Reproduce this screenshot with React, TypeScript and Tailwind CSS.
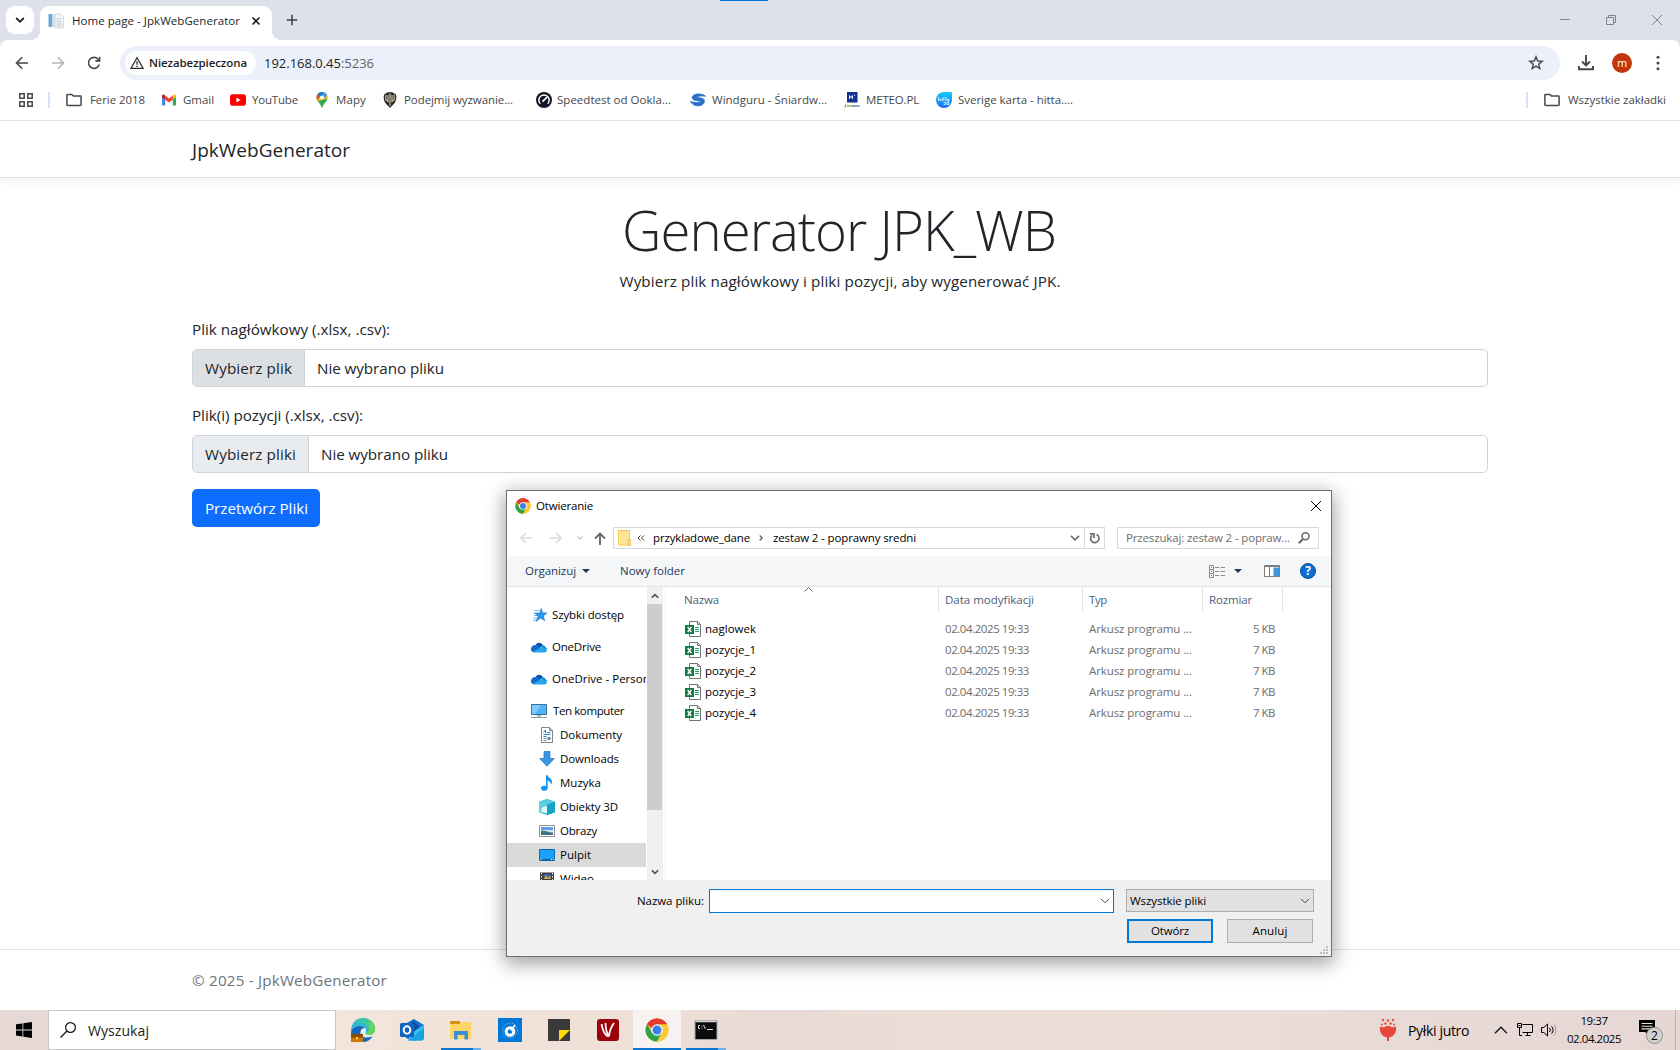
import { useLayoutEffect, useRef, type ReactNode } from "react";

/* One line of text whose tracking is adjusted so that it fills its box. */
function Fit({ className = "", children }: { className?: string; children: ReactNode }) {
  const box = useRef<HTMLSpanElement>(null);
  const inner = useRef<HTMLSpanElement>(null);
  useLayoutEffect(() => {
    const b = box.current;
    const i = inner.current;
    if (!b || !i) return;
    i.style.letterSpacing = "0px";
    const n = (i.textContent || "").length;
    const spare = b.getBoundingClientRect().width - i.getBoundingClientRect().width;
    i.style.letterSpacing = `${spare / Math.max(1, n)}px`;
  }, []);
  return (
    <span ref={box} className={`block shrink-0 whitespace-nowrap ${className}`}>
      <span ref={inner} className="inline-block">{children}</span>
    </span>
  );
}

function ChromeLogo({ className }: { className: string }) {
  return (
    <svg viewBox="0 0 48 48" className={className}>
      <circle cx="24" cy="24" r="23" fill="#fcc934" />
      <path d="M24 24 L4.1 12.5 A23 23 0 0 1 43.9 12.5 L24 12.5 Z" fill="#ea4335" />
      <path d="M4.1 12.5 A23 23 0 0 0 24 47 L34 29.7 L24 24 L14 29.7 Z" fill="#2ba24c" />
      <path d="M43.9 12.5 A23 23 0 0 1 24 47 L34 29.7 L33 18 L24 12.5 Z" fill="#fcc934" />
      <path d="M4.1 12.5 A23 23 0 0 1 43.9 12.5 L24 12.5 L13 20 Z" fill="#e33b2e" />
      <circle cx="24" cy="24" r="11.5" fill="#fff" />
      <circle cx="24" cy="24" r="9" fill="#3b7ded" />
    </svg>
  );
}

const FolderOutline = () => (
  <svg viewBox="0 0 16 16" className="h-4 w-4 shrink-0" fill="none" stroke="#474747" strokeWidth="1.5">
    <path d="M.9 3.1c0-.4.3-.7.7-.7h4.2l1.7 1.7h6.9c.4 0 .7.3.7.7v8c0 .4-.3.7-.7.7H1.6c-.4 0-.7-.3-.7-.7z" />
  </svg>
);

const GmailIcon = () => (
  <svg viewBox="0 0 16 16" className="h-4 w-4 shrink-0">
    <path d="M1 4v8.4c0 .6.5 1 1 1h2.2V7.2z" fill="#4285f4" />
    <path d="M11.8 13.4H14c.6 0 1-.4 1-1V4l-3.2 3.2z" fill="#34a853" />
    <path d="M11.8 3.5v4.2L15 5.3V4c0-1.200-1.300-1.900-2.300-1.200z" fill="#fbbc04" />
    <path d="M4.200 7.700V3.500L8 6.400l3.800-2.900v4.200L8 10.600z" fill="#ea4335" />
    <path d="M1 4v1.300l3.200 2.400V3.500l-.9-.7C2.300 2.100 1 2.800 1 4z" fill="#c5221f" />
  </svg>
);

const YouTubeIcon = () => (
  <svg viewBox="0 0 16 16" className="h-4 w-4 shrink-0">
    <rect x="0" y="2.300" width="16" height="11.400" rx="2.800" fill="#f00" />
    <path d="M6.400 5.600v4.800L10.600 8z" fill="#fff" />
  </svg>
);

const MapsIcon = () => (
  <svg viewBox="0 0 16 16" className="h-4 w-4 shrink-0">
    <path d="M8 0a5.500 5.500 0 0 1 5.500 5.500C13.500 9.500 9.500 10.500 8 16 6.500 10.500 2.500 9.500 2.500 5.500A5.500 5.500 0 0 1 8 0z" fill="#34a853" />
    <path d="M3.800 2L6.300 4.100 3.200 8.100C2.300 6.400 2 4 3.800 2z" fill="#ea4335" />
    <path d="M3.800 2C5 .5 7.500-.5 9.800.3L6.300 4.300z" fill="#1a73e8" />
    <path d="M9.800.3c1.500.5 2.700 1.500 3.300 3L9.600 7 8 3.500z" fill="#4f93f7" />
    <path d="M9.600 7l3.500-3.700c.8 1.900.3 3.900-.8 5.300L8.600 12 3.200 8.100l3-3.600z" fill="#fbbc04" />
    <path d="M4 9.200l6.100-2 3.100-.3c-.7 3.300-4 4.200-5.200 9.100C6.900 12.500 5.300 11 4 9.200z" fill="#34a853" />
    <circle cx="8" cy="5.500" r="2" fill="#fff" />
  </svg>
);

const TanksIcon = () => (
  <svg viewBox="0 0 16 16" className="h-4 w-4 shrink-0">
    <path d="M2 2.500C4 .8 6.500 0 8 0s4 .8 6 2.500c.8 4 0 7-2 9.200L8 16l-4-4.300C2 9.500 1.200 6.500 2 2.500z" fill="#2a2824" />
    <path d="M3.800 2.800v5l2.200 1.800V3M8 1.200V14.300M12.200 2.800v5L10 9.600V3" fill="none" stroke="#c8c1ad" strokeWidth="1.200" />
  </svg>
);

const SpeedtestIcon = () => (
  <svg viewBox="0 0 16 16" className="h-4 w-4 shrink-0">
    <circle cx="8" cy="8" r="8" fill="#141526" />
    <path d="M4.300 11.800a5.200 5.200 0 1 1 7.400 0" fill="none" stroke="#fff" strokeWidth="1.500" />
    <path d="M7 9.200L10.500 5.600" stroke="#fff" strokeWidth="1.700" strokeLinecap="round" />
  </svg>
);

const WindguruIcon = () => (
  <svg viewBox="0 0 16 16" className="h-4 w-4 shrink-0">
    <path
      d="M15.500 4.200C13 2 7 1 3.500 3.300 1.200 5 2 7.500 4.500 8.200c2.500.7 5.500.3 6.500 1.300-2 1.500-7 1.300-10.500 0 2 3.500 6.500 5.300 10.500 3.800 3.500-1.300 4.300-4.500 2.500-6.200C11.500 5.500 8 6 6 5.200c2-1.400 6.500-1.600 9.500-1z"
      fill="#2b6fc9"
      stroke="#2b6fc9"
      strokeWidth=".9"
      strokeLinejoin="round"
    />
  </svg>
);

const MeteoIcon = () => (
  <svg viewBox="0 0 16 16" className="h-4 w-4 shrink-0">
    <rect x="3" y="0" width="10.500" height="10.500" fill="#12328c" />
    <path d="M5.500 7V3.500l1.500 2.200 1.500-2.200V7" fill="none" stroke="#fff" strokeWidth=".9" />
    <path d="M10.200 3.200h1" stroke="#fff" strokeWidth="1" />
    <path d="M.5 15.300c1-.3 1.200-1.700 1.200-3M3 14h3.500" fill="none" stroke="#7ab32b" strokeWidth="1.300" />
    <path d="M7 14h8.500" stroke="#33558f" strokeWidth="1.100" />
  </svg>
);

const HittaIcon = () => (
  <svg viewBox="0 0 16 16" className="h-4 w-4 shrink-0">
    <defs>
      <linearGradient id="hitta" x1="0" y1="0" x2="0" y2="1">
        <stop offset="0" stopColor="#12ccf5" />
        <stop offset="1" stopColor="#1f6df5" />
      </linearGradient>
    </defs>
    <path d="M8 0h6.500C15.500 0 16 .5 16 1.500V8a8 8 0 1 1-8-8z" fill="url(#hitta)" />
    <path d="M2.500 5v4M2.500 7.300h2V9M6 5.800V9M7.800 5v4M9.800 5v4M11 7.300h2V9h-2zM7.500 10.500h2v2h-2M11 10.500h2v2h-2z" fill="none" stroke="#d9f3ff" strokeWidth=".9" />
  </svg>
);

const bookmarks: { icon: ReactNode; gap: string; label: string; text: string }[] = [
  { icon: <FolderOutline />, gap: "ml-4", label: "Ferie 2018", text: "ml-2 w-[55px]" },
  { icon: <GmailIcon />, gap: "ml-4", label: "Gmail", text: "ml-[6px] w-[31px]" },
  { icon: <YouTubeIcon />, gap: "ml-4", label: "YouTube", text: "ml-[6px] w-[46px]" },
  { icon: <MapsIcon />, gap: "ml-4", label: "Mapy", text: "ml-[6px] w-[30px]" },
  { icon: <TanksIcon />, gap: "ml-4", label: "Podejmij wyzwanie...", text: "ml-[6px] w-[109px]" },
  { icon: <SpeedtestIcon />, gap: "ml-[23px]", label: "Speedtest od Ookla...", text: "ml-[5px] w-[114px]" },
  { icon: <WindguruIcon />, gap: "ml-[19px]", label: "Windguru - Śniardw...", text: "ml-[6px] w-[115px]" },
  { icon: <MeteoIcon />, gap: "ml-[17px]", label: "METEO.PL", text: "ml-[6px] w-[53px]" },
  { icon: <HittaIcon />, gap: "ml-[17px]", label: "Sverige karta - hitta....", text: "ml-[6px] w-[115px]" },
];

function BrowserChrome() {
  return (
    <header className="relative h-[121px] shrink-0 bg-[#dee1e9]">
      <div className="absolute left-[720px] top-0 flex h-px w-[241px] bg-[#e6e6e6]">
        <div className="h-px w-12 bg-[#0078d7]" />
      </div>
      <div className="flex h-10 items-start">
        <button className="ml-[6px] mt-[6px] flex h-7 w-7 items-center justify-center rounded-[9px] bg-white">
          <svg viewBox="0 0 10 10" className="h-[10px] w-[10px]" fill="none" stroke="#1f1f1f" strokeWidth="1.800">
            <path d="M1.200 3l3.800 3.800L8.800 3" />
          </svg>
        </button>
        <span className="mt-[30px] h-[10px] w-[6px] bg-[radial-gradient(circle_at_-4px_0,transparent_10px,white_10.5px)]" />
        <div className="mt-[6px] flex h-[34px] w-[232px] items-center rounded-t-[9px] bg-white pb-[5px] pl-2">
          <svg viewBox="0 0 16 16" className="h-4 w-4 shrink-0">
            <path d="M.5 1h4v13h-4z" fill="#6aa9d8" />
            <path d="M4.500 1h4.500v13H4.500z" fill="#d4e2ec" />
            <path d="M7 1h6l2.500 2.500V15H7z" fill="#f1f3f5" stroke="#cdd2d6" strokeWidth=".7" />
            <path d="M8.500 6h5M8.500 8.500h5M8.500 11h5M8.500 13h5" stroke="#c3cad1" strokeWidth="1" />
          </svg>
          <Fit className="ml-2 w-[168px] text-[11.500px] leading-4 text-[#1f1f1f]">Home page - JpkWebGenerator</Fit>
          <svg viewBox="0 0 10 10" className="ml-[11px] h-[10px] w-[10px]" stroke="#1f1f1f" strokeWidth="1.600">
            <path d="M1.500 1.500l7 7M8.500 1.500l-7 7" />
          </svg>
        </div>
        <span className="mt-[30px] h-[10px] w-[10px] bg-[radial-gradient(circle_at_10px_0,transparent_10px,white_10.5px)]" />
        <svg viewBox="0 0 12 12" className="ml-1 mt-[14px] h-3 w-3" stroke="#3c4043" strokeWidth="1.500">
          <path d="M6 .8v10.400M.8 6h10.400" />
        </svg>
        <div className="ml-auto mr-[17px] mt-[14px] flex gap-[34px]">
          <svg viewBox="0 0 12 12" className="h-3 w-3" stroke="#808389" fill="none"><path d="M1 5.500h10" /></svg>
          <svg viewBox="0 0 12 12" className="h-3 w-3" stroke="#808389" fill="none"><path d="M1.500 3.500h7v7h-7zM3.500 3.500v-2h7v7h-2" /></svg>
          <svg viewBox="0 0 12 12" className="h-3 w-3" stroke="#808389" fill="none"><path d="M1 1l10 10M11 1L1 11" /></svg>
        </div>
      </div>
      <div className="h-[81px] rounded-t-[8px] border-b border-[#dfe0e2] bg-white">
        <div className="flex h-[46px] items-center">
          <svg viewBox="0 0 14 14" className="ml-[15px] h-[14px] w-[14px]" fill="none" stroke="#474747" strokeWidth="1.600">
            <path d="M13 7H1.800M7.200 1.300L1.500 7l5.700 5.700" />
          </svg>
          <svg viewBox="0 0 14 14" className="ml-[22px] h-[14px] w-[14px]" fill="none" stroke="#b4b4b4" strokeWidth="1.600">
            <path d="M1 7h11.200M6.800 1.300L12.500 7l-5.700 5.700" />
          </svg>
          <svg viewBox="0 0 14 14" className="ml-[22px] h-[14px] w-[14px]" fill="none" stroke="#474747" strokeWidth="1.600">
            <path d="M12.300 8.500A5.500 5.500 0 1 1 11 3l1.400 1.500" />
            <path d="M12.600.7v4.200H8.400" />
          </svg>
          <div className="ml-[19px] flex h-[34px] w-[1440px] items-center rounded-full bg-[#ecf0fa]">
            <div className="ml-[5px] flex h-6 w-[131px] items-center rounded-full bg-white">
              <svg viewBox="0 0 14 14" className="ml-[5px] h-[14px] w-[14px]" fill="none" stroke="#2f2f2f" strokeWidth="1.300">
                <path d="M7 1.700L13 12.300H1z" />
                <path d="M7 5.300v3.500M7 9.700v1.300" />
              </svg>
              <Fit className="ml-[5px] w-[98px] text-[11.500px] font-semibold leading-4 text-[#1f1f1f]">Niezabezpieczona</Fit>
            </div>
            <Fit className="ml-2 w-[110px] text-[13px] leading-5 text-[#1f1f1f]">
              192.168.0.45<span className="text-[#5f6368]">:5236</span>
            </Fit>
            <svg viewBox="0 0 16 16" className="ml-auto mr-4 h-4 w-4" fill="none" stroke="#474747" strokeWidth="1.400">
              <path d="M8 1.800l1.700 4.200 4.500.3-3.500 2.900 1.100 4.400L8 11.200l-3.800 2.400 1.100-4.400L1.800 6.300l4.500-.3z" />
            </svg>
          </div>
          <svg viewBox="0 0 16 16" className="ml-[18px] h-4 w-4" fill="none" stroke="#474747" strokeWidth="1.900">
            <path d="M8 0v10M4 6.500l4 4 4-4M1 11v3.200h14V11" />
          </svg>
          <div className="ml-[18px] flex h-5 w-5 items-center justify-center rounded-full bg-[#c1360d] pb-0.5 text-[11px] leading-none text-white">m</div>
          <svg viewBox="0 0 4 16" className="ml-6 h-4 w-1" fill="#474747">
            <circle cx="2" cy="2.300" r="1.500" /><circle cx="2" cy="8" r="1.500" /><circle cx="2" cy="13.700" r="1.500" />
          </svg>
        </div>
        <div className="flex h-7 items-center text-[11.500px] leading-4 text-[#474747]">
          <svg viewBox="0 0 14 14" className="ml-[19px] h-[14px] w-[14px]" fill="none" stroke="#474747" strokeWidth="1.500">
            <path d="M.8.8h4.400v4.400H.8zM8.800.8h4.400v4.400H8.800zM.8 8.800h4.400v4.400H.8zM8.800 8.800h4.400v4.400H8.800z" />
          </svg>
          <div className="ml-[15px] h-4 w-0.5 bg-[#d3e3fd]" />
          {bookmarks.map((b) => (
            <div key={b.label} className={`flex items-center ${b.gap}`}>
              {b.icon}
              <Fit className={b.text}>{b.label}</Fit>
            </div>
          ))}
          <div className="ml-auto h-4 w-0.5 bg-[#d3e3fd]" />
          <div className="ml-4 mr-[14px] flex items-center">
            <FolderOutline />
            <Fit className="ml-2 w-[98px]">Wszystkie zakładki</Fit>
          </div>
        </div>
      </div>
    </header>
  );
}

function FileField({ button, buttonWidth, hovered }: { button: string; buttonWidth: string; hovered?: boolean }) {
  return (
    <div className="flex h-[38px] overflow-hidden rounded-[5px] border border-[#ced4da] bg-white leading-6">
      <div className={`flex items-center border-r border-[#ced4da] pl-3 pr-3 ${hovered ? "bg-[#dde0e3]" : "bg-[#e9ecef]"}`}>
        <Fit className={buttonWidth}>{button}</Fit>
      </div>
      <div className="flex items-center pl-3">
        <Fit className="w-[127px]">Nie wybrano pliku</Fit>
      </div>
    </div>
  );
}

function Page() {
  return (
    <div className="flex h-[889px] flex-col bg-white text-[15.200px] text-[#212529]">
      <nav className="h-[57px] shrink-0 border-b border-[#dee2e6] px-48 pt-[14px] shadow-[0_4px_12px_rgba(0,0,0,.05)]">
        <Fit className="w-[158px] text-[19px] leading-[30px]">JpkWebGenerator</Fit>
      </nav>
      <main className="flex flex-1 flex-col px-48">
        <h1 className="mt-[19px] flex justify-center pr-[2px] text-[54.500px] font-light leading-[67px]">
          <Fit className="w-[434px]">Generator JPK_WB</Fit>
        </h1>
        <p className="mt-[5px] flex justify-center leading-6">
          <Fit className="w-[441px]">Wybierz plik nagłówkowy i pliki pozycji, aby wygenerować JPK.</Fit>
        </p>
        <label className="mt-6 leading-6"><Fit className="w-[198px]">Plik nagłówkowy (.xlsx, .csv):</Fit></label>
        <div className="mt-2"><FileField button="Wybierz plik" buttonWidth="w-[87px]" hovered /></div>
        <label className="mt-4 leading-6"><Fit className="w-[171px]">Plik(i) pozycji (.xlsx, .csv):</Fit></label>
        <div className="mt-2"><FileField button="Wybierz pliki" buttonWidth="w-[91px]" /></div>
        <button className="mt-4 flex h-[38px] w-32 items-center rounded-[5px] bg-[#0d6efd] pl-[13px] leading-6 text-white">
          <Fit className="w-[103px]">Przetwórz Pliki</Fit>
        </button>
      </main>
      <footer className="h-[61px] shrink-0 border-t border-[#dee2e6] px-48 pt-[18px] leading-6 text-[#6c757d]">
        <Fit className="w-[195px]">© 2025 - JpkWebGenerator</Fit>
      </footer>
    </div>
  );
}

const Cloud = () => (
  <svg viewBox="0 0 16 16" className="h-4 w-4 shrink-0">
    <path d="M4.500 6.500C5.500 3.500 9.500 2 12 6.300l-4 3.200z" fill="#0a4fa8" />
    <path d="M4.500 5.900C2 5.800 0 7.600 0 10c0 1.400.7 2.600 2 3.300l8-4.500C8.500 6.900 6.500 5.700 4.500 5.900z" fill="#0f6cc9" />
    <path d="M9.500 7.500c1.500-1.800 4-1.700 5 .6.900.5 1.500 1.300 1.500 2.500l-3 .4z" fill="#1b8fe0" />
    <path d="M1.500 13l8.300-4.200L16 10.800c0 1.700-1.200 2.700-2.700 2.700H3.500c-.8 0-1.500-.2-2-.5z" fill="#27a5ee" />
  </svg>
);

const quick: { icon: ReactNode; label: string; text: string }[] = [
  {
    label: "Szybki dostęp", text: "w-[72px]",
    icon: (
      <svg viewBox="0 0 16 16" className="h-4 w-4 shrink-0">
        <path d="M3.500 3.500h5M2 6h5M3 8.500h5M2.500 11h4M2 13.300h3.500" stroke="#5db2ee" strokeWidth=".9" />
        <path d="M10.200 1.500l1.400 4.300 4.400.2-3.600 2.800 1.300 5-3.900-2.700-4.600 3.200 1.900-5L4 6.500l4.700-.5z" fill="#2b95e3" stroke="#1977c6" strokeWidth=".6" />
      </svg>
    ),
  },
  { label: "OneDrive", text: "w-[49px]", icon: <Cloud /> },
];

const places: { icon: ReactNode; label: string; text: string; active?: boolean }[] = [
  {
    label: "Dokumenty", text: "w-[62px]",
    icon: <><path d="M2.500.5h8l3 3v12h-11z" fill="#fff" stroke="#858585" /><path d="M10.500.5v3h3" fill="none" stroke="#858585" /><path d="M4.500 5.500l2-2.500v3M8 5.500h3.500M4.500 7.500h7M4.500 9.500h3" stroke="#2a86cf" fill="none" /><path d="M4.500 11.500h3M4.500 13.500h3" stroke="#8d8d8d" fill="none" /><path d="M8.500 10h3v3h-3z" fill="#4c8f9f" /></>,
  },
  {
    label: "Downloads", text: "w-[59px]",
    icon: <path d="M5 .5h6v7h4.300L8 15.300.7 7.500H5z" fill="#3a96e6" stroke="#2273ba" strokeWidth=".7" />,
  },
  {
    label: "Muzyka", text: "w-[41px]",
    icon: <><ellipse cx="5.300" cy="13.200" rx="3.300" ry="2.500" fill="#0f96f2" /><path d="M7 .3h1.600c.3 2 4.600 3.500 4.400 6.500 0 1.200-.5 2.200-1.200 3 .3-2-.8-3.500-3.200-4.300v7.700H7z" fill="#0f96f2" /></>,
  },
  {
    label: "Obiekty 3D", text: "w-[58px]",
    icon: <><path d="M8 0l8 2.700v10.600L8 16l-8-2.700V2.700z" fill="#21b6cf" /><path d="M8 0l8 2.700-8 3-8-3z" fill="#58cfe0" /><path d="M0 2.700l8 3v4L2 14 0 13.300z" fill="#5fd3e2" /><path d="M3 8.500l5-1.500v7.500L2 13z" fill="#e0fafc" /><path d="M8 5.700l8-3v10.600L8 16z" fill="#19a2c2" /></>,
  },
  {
    label: "Obrazy", text: "w-[37px]",
    icon: <><path d="M.5 2.500h15v11H.5z" fill="#fff" stroke="#8f8f8f" /><path d="M2 4h12v3.500H2z" fill="#5d9ee8" /><path d="M2 7h12v2H2z" fill="#cfe4f2" /><path d="M2 7.500c4 0 8 2 12 2V12H2z" fill="#3f7187" /></>,
  },
  {
    label: "Pulpit", text: "w-[31px]", active: true,
    icon: <><path d="M.5 2.500h15v11H.5z" fill="#1ea0fa" stroke="#0a69b0" /><path d="M1 12.500h14" stroke="#0c5e9e" /><path d="M1.500 12.500h1M12 12.500h1M14 12.500h1" stroke="#fff" /></>,
  },
  {
    label: "Wideo", text: "w-[34px]",
    icon: <><path d="M1 1.500h14v13H1z" fill="#3c3c3c" /><path d="M2.500 2v12M13.500 2v12" stroke="#e8e8e8" strokeDasharray="1.500 1.500" /><path d="M4.500 3h7v5h-7z" fill="#3a5fa8" /><path d="M5 8l2-4 2 3 2.500-3v4z" fill="#d9a72c" /></>,
  },
];

const files = [
  { name: "naglowek", text: "w-[51px]", size: "5 KB" },
  { name: "pozycje_1", text: "w-[51px]", size: "7 KB" },
  { name: "pozycje_2", text: "w-[51px]", size: "7 KB" },
  { name: "pozycje_3", text: "w-[51px]", size: "7 KB" },
  { name: "pozycje_4", text: "w-[51px]", size: "7 KB" },
];

const ExcelIcon = () => (
  <svg viewBox="0 0 16 16" className="h-4 w-4 shrink-0">
    <path d="M4.500.5h8l3 3v12h-11z" fill="#fff" stroke="#757575" />
    <path d="M12.500.5v3h3" fill="none" stroke="#757575" />
    <path d="M10 6.500h4M10 8.500h4M10 10.500h4" stroke="#21a366" strokeWidth="1" />
    <path d="M0 4h9v9H0z" fill="#107c41" />
    <path d="M2.700 6l3.600 5M6.300 6l-3.600 5" stroke="#fff" strokeWidth="1.400" />
  </svg>
);

const Chevron = ({ className }: { className: string }) => (
  <svg viewBox="0 0 10 6" className={className} fill="none" stroke="currentColor"><path d="M1 .8l4 4 4-4" /></svg>
);

function OpenDialog() {
  return (
    <div className="absolute left-[506px] top-[490px] flex h-[467px] w-[826px] flex-col border border-[#6c6f74] bg-white text-[11.500px] leading-4 text-black shadow-[0_5px_18px_2px_rgba(0,0,0,.36)]">
      <div className="flex h-[29px] shrink-0 items-center">
        <ChromeLogo className="ml-2 h-4 w-4" />
        <Fit className="ml-[5px] w-[57px]">Otwieranie</Fit>
        <svg viewBox="0 0 12 12" className="ml-auto mr-[9px] h-3 w-3" stroke="#000" fill="none"><path d="M1 1l10 10M11 1L1 11" /></svg>
      </div>
      <div className="mt-[7px] flex h-[22px] shrink-0 items-center">
        <svg viewBox="0 0 13 12" className="ml-[13px] h-3 w-[13px]" fill="none" stroke="#dcdcdc" strokeWidth="1.600"><path d="M12 6H1.500M6 1L1 6l5 5" /></svg>
        <svg viewBox="0 0 13 12" className="ml-[16px] h-3 w-[13px]" fill="none" stroke="#dcdcdc" strokeWidth="1.600"><path d="M0 6h11.500M7 1l5 5-5 5" /></svg>
        <svg viewBox="0 0 6 4" className="ml-[15px] h-1 w-[6px]" fill="none" stroke="#c8c8c8" strokeWidth="1.300"><path d="M.5.5L3 3 5.500.5" /></svg>
        <svg viewBox="0 0 12 13" className="ml-[11px] h-[13px] w-3" fill="none" stroke="#6a6a6a" strokeWidth="1.900"><path d="M6 13V1.500M1 6.500l5-5 5 5" /></svg>
        <div className="ml-[7px] flex h-[22px] w-[492px] items-center border border-[#d9d9d9]">
          <svg viewBox="0 0 13 16" className="ml-1 h-4 w-[13px]">
            <path d="M.5.5h11v14.500H.5z" fill="#ffe596" stroke="#f3c94f" />
            <path d="M10 9.500h2.500v6H10z" fill="#f9dc7c" stroke="#e9bd3f" strokeWidth=".7" />
          </svg>
          <svg viewBox="0 0 8 6" className="ml-[6px] h-[6px] w-2" fill="none" stroke="#444"><path d="M3.500.5L1 3l2.500 2.500M7 .5L4.500 3 7 5.500" /></svg>
          <Fit className="ml-2 w-[97px]">przykladowe_dane</Fit>
          <svg viewBox="0 0 4 6" className="ml-[9px] h-[6px] w-1" fill="none" stroke="#555" strokeWidth="1.200"><path d="M.7.5L3.200 3 .7 5.500" /></svg>
          <Fit className="ml-[10px] w-[143px]">zestaw 2 - poprawny sredni</Fit>
          <svg viewBox="0 0 10 6" className="ml-auto mr-[4px] h-[6px] w-[10px]" fill="none" stroke="#707070" strokeWidth="1.800"><path d="M1 .8l4 4 4-4" /></svg>
          <div className="flex h-full w-5 items-center justify-center border-l border-[#d9d9d9]">
            <svg viewBox="0 0 12 12" className="h-3 w-3" fill="none" stroke="#6a6a6a" strokeWidth="1.600">
              <path d="M7.500 2.600A4.200 4.200 0 1 1 3 3.300" />
              <path d="M.8 1.800H5V6" strokeWidth="1.700" />
            </svg>
          </div>
        </div>
        <div className="ml-3 flex h-[22px] w-[202px] items-center border border-[#d9d9d9] text-[#6d6d6d]">
          <Fit className="ml-2 w-[164px]">Przeszukaj: zestaw 2 - popraw...</Fit>
          <svg viewBox="0 0 12 12" className="ml-2 h-3 w-3" fill="none" stroke="#6a6a6a" strokeWidth="1.500"><circle cx="7.500" cy="4.300" r="3.500" /><path d="M5 7L.8 11.200" strokeWidth="2" /></svg>
        </div>
      </div>
      <div className="mt-[7px] flex h-[31px] shrink-0 items-center border-b border-[#e3e5e8] bg-[#f4f6f8] text-[#1e395b]">
        <Fit className="ml-[18px] w-[51px]">Organizuj</Fit>
        <svg viewBox="0 0 8 4" className="ml-[6px] h-1 w-2" fill="#1e395b"><path d="M0 0h8L4 4z" /></svg>
        <Fit className="ml-[30px] w-[65px]">Nowy folder</Fit>
        <svg viewBox="0 0 16 13" className="ml-auto h-[13px] w-4" fill="none" stroke="#8b8b8b">
          <path d="M.5.5h4v12h-4zM.5 4.500h4M.5 8.500h4M6 2.500h4M11.500 2.500H16M6 6.500h4M11.500 6.500H16M6 10.500h4M11.500 10.500H16" />
          <path d="M2 2.500h1M2 6.500h1M2 10.500h1" stroke="#2b7cd3" />
        </svg>
        <svg viewBox="0 0 8 4" className="ml-[9px] h-1 w-2" fill="#1e395b"><path d="M0 0h8L4 4z" /></svg>
        <svg viewBox="0 0 16 12" className="ml-[22px] h-3 w-4">
          <path d="M.5.5h15v11H.5z" fill="#fff" stroke="#7d7d7d" /><path d="M0 1.500h16M5.500 2v10" stroke="#7d7d7d" /><path d="M9.500 2.500h5.500v8.500H9.500z" fill="#3c97e0" />
        </svg>
        <div className="ml-5 mr-[15px] flex h-4 w-4 items-center justify-center rounded-full border border-[#0b4f94] bg-[#0a6fd0] text-[12px] font-bold leading-none text-white">?</div>
      </div>
      <div className="flex h-[293px] shrink-0">
        <div className="w-[139px] overflow-hidden pt-3">
          {quick.map((q) => (
            <div key={q.label} className="flex h-8 items-center pl-6">
              {q.icon}
              <Fit className={`ml-[5px] ${q.text}`}>{q.label}</Fit>
            </div>
          ))}
          <div className="flex h-8 items-center pl-6">
            <Cloud />
            <span className="ml-[5px] w-[94px] overflow-hidden"><Fit className="w-[107px]">OneDrive - Personal</Fit></span>
          </div>
          <div className="mt-1 flex h-6 items-center pl-6">
            <svg viewBox="0 0 16 16" className="h-4 w-4 shrink-0">
              <path d="M.5 1.500h15v10H.5z" fill="#4db4f8" stroke="#35729f" /><path d="M1 2h9L4 11H1z" fill="#7ccbfc" /><path d="M6 12h4v1.500H6z" fill="#9aa" /><path d="M0 14.500h16" stroke="#8299ad" />
            </svg>
            <Fit className="ml-[6px] w-[71px]">Ten komputer</Fit>
          </div>
          {places.map((p) => (
            <div key={p.label} className={`flex h-6 items-center pl-8 ${p.active ? "bg-[#d9d9d9]" : ""}`}>
              <svg viewBox="0 0 16 16" className="h-4 w-4 shrink-0">{p.icon}</svg>
              <Fit className={`ml-[5px] ${p.text}`}>{p.label}</Fit>
            </div>
          ))}
        </div>
        <div className="ml-px flex w-4 flex-col items-center bg-[#f0f0f0]">
          <svg viewBox="0 0 10 6" className="mr-px mt-[6px] h-[6px] w-[8px]" fill="none" stroke="#505050" strokeWidth="2"><path d="M1 5.200l4-4 4 4" /></svg>
          <div className="mt-[5px] h-[206px] w-[15px] self-start bg-[#cdcdcd]" />
          <svg viewBox="0 0 10 6" className="mb-[5px] mr-px mt-auto h-[6px] w-[8px]" fill="none" stroke="#505050" strokeWidth="2"><path d="M1 .8l4 4 4-4" /></svg>
        </div>
        <div className="ml-0.5 w-px bg-[#f3f3f3]" />
        <div className="flex-1">
          <div className="flex h-[25px] items-center text-[#4c607a]">
            <div className="relative flex h-full w-[273px] items-center border-r border-[#e5e5e5] pl-[18px]">
              <Fit className="w-[35px]">Nazwa</Fit>
              <svg viewBox="0 0 9 5" className="absolute left-[138px] top-0 h-[5px] w-[9px]" fill="none" stroke="#6a6a6a"><path d="M.5 4.500l4-4 4 4" /></svg>
            </div>
            <div className="flex h-full w-36 items-center border-r border-[#e5e5e5] pl-[6px]"><Fit className="w-[89px]">Data modyfikacji</Fit></div>
            <div className="flex h-full w-[120px] items-center border-r border-[#e5e5e5] pl-[6px]"><Fit className="w-[18px]">Typ</Fit></div>
            <div className="flex h-full w-20 items-center border-r border-[#e5e5e5] pl-[6px]"><Fit className="w-[43px]">Rozmiar</Fit></div>
          </div>
          <div className="mt-[6px]">
            {files.map((f) => (
              <div key={f.name} className="flex h-[21px] items-center text-[#6d6d6d]">
                <div className="flex w-[273px] items-center pl-[19px] text-black">
                  <ExcelIcon />
                  <Fit className={`ml-1 ${f.text}`}>{f.name}</Fit>
                </div>
                <div className="w-36 pl-[6px]"><Fit className="w-[84px]">02.04.2025 19:33</Fit></div>
                <div className="w-[120px] pl-[6px]"><Fit className="w-[103px]">Arkusz programu ...</Fit></div>
                <div className="flex w-[72px] justify-end"><Fit className="w-[22px]">{f.size}</Fit></div>
              </div>
            ))}
          </div>
        </div>
      </div>
      <div className="flex-1 bg-[#f0f0f0]">
        <div className="flex pt-[9px]">
          <Fit className="ml-[130px] mt-1 w-[67px]">Nazwa pliku:</Fit>
          <div className="ml-[5px] flex h-6 w-[405px] items-center justify-end border border-[#0078d7] bg-white pr-[3px]">
            <Chevron className="h-[6px] w-[10px] text-[#444]" />
          </div>
          <div className="ml-3 flex h-[23px] w-[188px] items-center justify-between border border-[#adadad] bg-[#e1e1e1] pl-[3px] pr-[3px]">
            <Fit className="w-[76px]">Wszystkie pliki</Fit>
            <Chevron className="h-[6px] w-[10px] text-[#444]" />
          </div>
        </div>
        <div className="mt-[6px] flex">
          <button className="ml-[620px] flex h-6 w-[86px] items-center justify-center border-2 border-[#0078d7] bg-[#e1e1e1]"><Fit className="w-[38px]">Otwórz</Fit></button>
          <button className="ml-[14px] flex h-6 w-[86px] items-center justify-center border border-[#adadad] bg-[#e1e1e1]"><Fit className="w-[35px]">Anuluj</Fit></button>
        </div>
        <svg viewBox="0 0 8 8" className="ml-auto mr-[3px] mt-[3px] h-2 w-2" fill="#bcbcbc">
          <path d="M6 0h2v2H6zM3 3h2v2H3zM6 3h2v2H6zM0 6h2v2H0zM3 6h2v2H3zM6 6h2v2H6z" />
        </svg>
      </div>
    </div>
  );
}

function Taskbar() {
  return (
    <div className="flex h-10 shrink-0 items-center bg-[linear-gradient(90deg,#e5d8d5_0px,#e5d8d5_48px,#f2e5db_336px,#efe1d8_600px,#e9dad5_760px,#eddfd8_1100px,#e8dad6_1400px,#e6d7d4_1680px)] text-black">
      <svg viewBox="0 0 16 16" className="ml-4 h-4 w-4"><path d="M0 2.300l6.500-.9v6.100H0zM7.300 1.300L16 0v7.500H7.300zM0 8.400h6.500v6.100L0 13.600zM7.300 8.400H16V16l-8.700-1.300z" /></svg>
      <div className="ml-4 flex h-10 w-72 items-center border border-[#c6c6c6] bg-white">
        <svg viewBox="0 0 16 16" className="ml-[11px] h-4 w-4" fill="none" stroke="#111" strokeWidth="1.200"><circle cx="10.500" cy="5.500" r="4.900" /><path d="M7 9L.5 15.500" /></svg>
        <Fit className="ml-3 mt-px w-[61px] text-[14px] leading-5 text-[#222]">Wyszukaj</Fit>
      </div>
      <svg viewBox="0 0 24 24" className="ml-[15px] h-6 w-6">
        <path d="M0 14C0 5 5 0 12 0s12 5 12 11c0 4-3 6-7 6-2 0-3-.6-3-1.500 0-.8 1-1 1-3C15 9.500 12 8 8.500 8 4 8 .8 10.500 0 14z" fill="#2fb7d8" />
        <path d="M12 0c7 0 12 5 12 11 0 4-3 6-7 6-2 0-3-.6-3-1.500 5-1 4-7.500-2-10C9 4 5 4.500 3 6 5 2 8 0 12 0z" fill="#3cc7a4" />
        <path d="M17 1.200C21.300 3 24 6.800 24 11c0 4-3 6-7 6-2 0-3-.6-3-1.500 4.500-.5 6-8 3-14.300z" fill="#62d65b" />
        <path d="M0 14c.8-3.500 4-6 8.500-6 2.500 0 4.500.8 5.500 2.300-3-.5-4.800 1.700-4.500 4.700.3 3.500 4 6 12 3.500-2 3.500-5.500 5.500-9.500 5.500C5 24 0 19.500 0 14z" fill="#1366bd" />
        <path d="M14 10.300c1.500 1 1.300 3 .5 4.200-.8 1.200.5 2.500 3 2.500-1 1.200-5.500 1.500-7.300-.5-1.300-2.700.8-6 3.800-6.200z" fill="#e9eef0" />
        <path d="M0 16h12v8H0z" fill="#c87807" /><path d="M0 16h12v3.500H0z" fill="#8f4a06" /><path d="M5 19h2v2.500H5z" fill="#ffc83d" />
      </svg>
      <svg viewBox="0 0 24 24" className="ml-[25px] h-6 w-6">
        <path d="M5 6l9-5 10 6v12L14 23 6 20z" fill="#1471cf" /><path d="M12 13l12-6v13c0 1.500-1 2.500-2.500 2.500H8z" fill="#35c1ee" /><path d="M24 10v10c0 1.500-1 2.500-2.500 2.500H8z" fill="#19a2e6" /><path d="M12 2l8 7-8 6z" fill="#0b4fa5" />
        <rect x="0" y="5" width="14" height="14" rx="1.500" fill="#0f64bd" /><ellipse cx="7" cy="12" rx="3.300" ry="3.800" fill="none" stroke="#fff" strokeWidth="2" />
      </svg>
      <div className="relative ml-[17px] flex h-10 w-10 items-center justify-center">
        <svg viewBox="0 0 24 24" className="h-6 w-6">
          <path d="M1 4h21v17H1z" fill="#fdd667" /><path d="M1 3h10v3H1z" fill="#d8920c" /><path d="M5 13h14v8.500h-3.500V17h-7v4.500H5z" fill="#3d8fd3" />
        </svg>
        <div className="absolute bottom-0 left-0 flex h-0.5 w-10 bg-[#6cb1ec]"><div className="w-8 bg-[#0c77d1]" /></div>
      </div>
      <svg viewBox="0 0 24 24" className="ml-[17px] h-6 w-6">
        <path d="M0 0h24v24H0z" fill="#0078d7" />
        <circle cx="12" cy="12.500" r="7.300" fill="none" stroke="#b8dcf8" strokeWidth="1" strokeDasharray="1 1.600" />
        <circle cx="12" cy="13.500" r="3.800" fill="none" stroke="#fff" strokeWidth="3" />
        <path d="M13 12.500L17 7" stroke="#fff" strokeWidth="1.800" />
      </svg>
      <svg viewBox="0 0 24 24" className="ml-[25px] h-6 w-6"><path d="M1 1h22v22H1z" fill="#3a3a3a" /><path d="M12 12h11L12 23z" fill="#ffdc00" /></svg>
      <svg viewBox="0 0 24 24" className="ml-[25px] h-6 w-6"><rect x="1" y="1" width="22" height="22" rx="3" fill="#98040a" /><path d="M5.500 6c1 6 3 11 7 12.500M9.500 5c0 5 1 9.500 3.500 13.500M18 5c-3 4-4.500 8-5 13.500" fill="none" stroke="#fff" strokeWidth="1.700" /></svg>
      <div className="relative ml-[13px] flex h-10 w-12 items-center justify-center bg-[#f7f2ef]">
        <ChromeLogo className="h-6 w-6" />
        <div className="absolute bottom-0 left-0 h-0.5 w-12 bg-[#0c77d1]" />
      </div>
      <div className="relative ml-[5px] flex h-10 w-10 items-center justify-center">
        <svg viewBox="0 0 24 20" className="h-5 w-6">
          <path d="M1 .5h22v19H1z" fill="#0b0b0b" stroke="#a7a7a7" /><path d="M1.500 1.500h21" stroke="#d9d9d9" strokeWidth="1.500" /><path d="M6 5.500H4.500v3H6M8 5.800v.8M8 7.800v.8M9.500 5l2 4M13 9.500h6" fill="none" stroke="#ddd" />
        </svg>
        <div className="absolute bottom-0 left-0 flex h-0.5 w-10 bg-[#6cb1ec]"><div className="w-8 bg-[#0c77d1]" /></div>
      </div>
      <svg viewBox="0 0 18 24" className="ml-auto h-6 w-[18px]" fill="#e8483b">
        <path d="M1 9c2-1 3 .7 4 .3C6.500 8.500 7.500 8 9 8s2.500.5 4 1.300c1 .4 2-1.300 4-.3 1 6-3 10-7 10.300V23H8v-3.700C4 19 0 15 1 9z" />
        <circle cx="4" cy="2" r="1.200" /><circle cx="9" cy="2.500" r="1.200" /><circle cx="14" cy="2" r="1.200" /><circle cx="6.500" cy="5.500" r="1.200" /><circle cx="11.500" cy="5.500" r="1.200" /><circle cx="3" cy="6.500" r="1" /><circle cx="15" cy="6.500" r="1" />
      </svg>
      <Fit className="ml-[11px] mt-px w-[61px] text-[14px] leading-5">Pyłki jutro</Fit>
      <svg viewBox="0 0 14 8" className="ml-[25px] h-2 w-[14px]" fill="none" stroke="#111" strokeWidth="1.300"><path d="M1 7.200L7 1.200l6 6" /></svg>
      <svg viewBox="0 0 16 14" className="ml-[9px] h-[14px] w-4" fill="none" stroke="#000"><path d="M5.500 1.500h10v8h-10M8.500 12.500h5M10.500 9.500v3M.5.500h4v4h-4zM2.500 4.500v8H5M1.500 2.500h2" /></svg>
      <svg viewBox="0 0 17 14" className="ml-2 h-[14px] w-[17px]" fill="none" stroke="#000"><path d="M.5 4.500h2.300L6.500 1v12L2.800 9.500H.5zM8.500 5a3 3 0 0 1 0 4M10.500 3.300a5 5 0 0 1 0 7.400" /><path d="M13 1.500c2.500 3 2.500 8 0 11" stroke="#999" /></svg>
      <div className="ml-[9px] flex flex-col items-center text-[11.500px]">
        <Fit className="w-[27px] leading-[18px]">19:37</Fit>
        <Fit className="w-[54px] leading-[18px]">02.04.2025</Fit>
      </div>
      <div className="relative ml-[18px] mt-1 h-6 w-6">
        <svg viewBox="0 0 16 16" className="h-4 w-4"><path d="M0 0h16v12H10v3.500L6 12H0z" /><path d="M2.500 3.500h11M2.500 6.200h11M2.500 8.900h11" stroke="#e8dad6" strokeWidth="1.100" /></svg>
        <div className="absolute left-[7px] top-[7px] flex h-[17px] w-[17px] items-center justify-center rounded-full border border-[#8c8c8c] bg-[#d4d2d1] text-[12px] leading-none">2</div>
      </div>
      <div className="ml-3 mr-1 h-10 w-px bg-[#bdb0ad]" />
    </div>
  );
}

export default function App() {
  return (
    <div className="relative flex h-[1050px] w-[1680px] flex-col overflow-hidden bg-white font-['Open_Sans','Noto_Sans',sans-serif]">
      <BrowserChrome />
      <Page />
      <OpenDialog />
      <Taskbar />
    </div>
  );
}
